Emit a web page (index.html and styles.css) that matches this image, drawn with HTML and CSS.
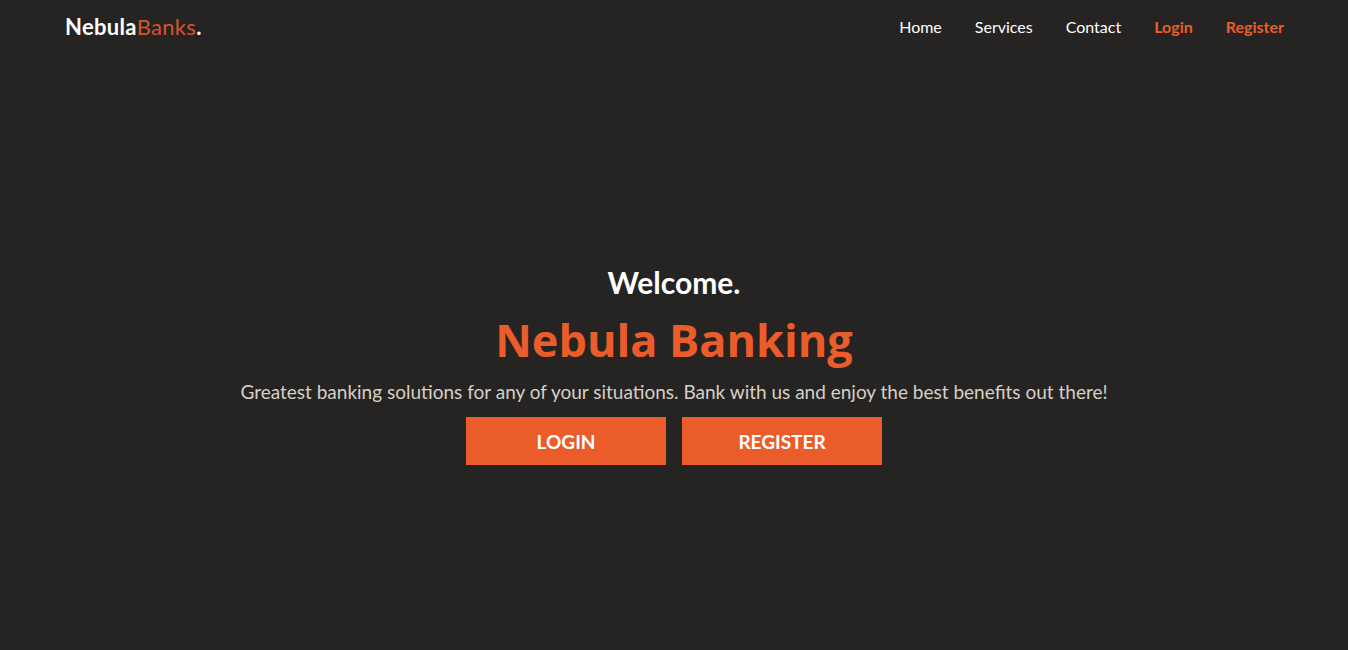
FILE: index.html
```html
<!DOCTYPE html>
<html lang="en">
<head>
<meta charset="utf-8">
<title>NebulaBanks</title>
<link rel="stylesheet" href="styles.css">
</head>
<body>
<header class="nav">
  <a class="logo" href="#">Nebula<span class="logo-accent">Banks</span>.</a>
  <nav class="links">
    <a href="#">Home</a>
    <a href="#">Services</a>
    <a href="#">Contact</a>
    <a class="accent" href="#">Login</a>
    <a class="accent" href="#">Register</a>
  </nav>
</header>
<main class="hero">
  <h2 class="welcome">Welcome.</h2>
  <h1 class="title">Nebula Banking</h1>
  <p class="lead">Greatest banking solutions for any of your situations. Bank with us and enjoy the best benefits out there!</p>
  <div class="actions">
    <a class="btn" href="#">LOGIN</a>
    <a class="btn" href="#">REGISTER</a>
  </div>
</main>
</body>
</html>
```
FILE: styles.css
```css
* { box-sizing: border-box; }
html, body { margin: 0; padding: 0; }
body {
  background: #252423;
  color: #ffffff;
  font-family: Lato, "Noto Sans", sans-serif;
  height: 650px;
  overflow: hidden;
  display: flex;
  flex-direction: column;
}
a { text-decoration: none; color: inherit; }
.nav {
  height: 53px;
  display: flex;
  align-items: center;
  justify-content: space-between;
  padding: 0 64px 0 65px;
}
.logo {
  font-size: 22px;
  font-weight: 700;
  color: #fff;
  letter-spacing: 0.3px;
}
.logo-accent { color: #d4552a; font-weight: 400; }
.links { display: flex; gap: 33px; font-size: 16px; }
.links a { color: #fff; }
.links a.accent { color: #ea5d2a; font-weight: 700; }
.hero {
  flex: 1;
  display: flex;
  flex-direction: column;
  align-items: center;
  padding-top: 209px;
}
.welcome {
  margin: 0;
  font-size: 30px;
  font-weight: 700;
  line-height: 40px;
}
.title {
  margin: 0;
  font-family: "Open Sans", Lato, sans-serif;
  font-size: 45px;
  font-weight: 700;
  color: #ea5d2a;
  line-height: 64px;
  margin-top: 6px;
}
.lead {
  margin: 7px 0 0;
  font-size: 19px;
  color: #d6d0c4;
  line-height: 26px;
}
.actions { display: flex; gap: 16px; margin-top: 12px; }
.btn {
  width: 200px;
  height: 48px;
  background: #ea5d2a;
  color: #fff;
  font-weight: 700;
  font-size: 19px;
  display: flex;
  align-items: center;
  justify-content: center;
}
```
